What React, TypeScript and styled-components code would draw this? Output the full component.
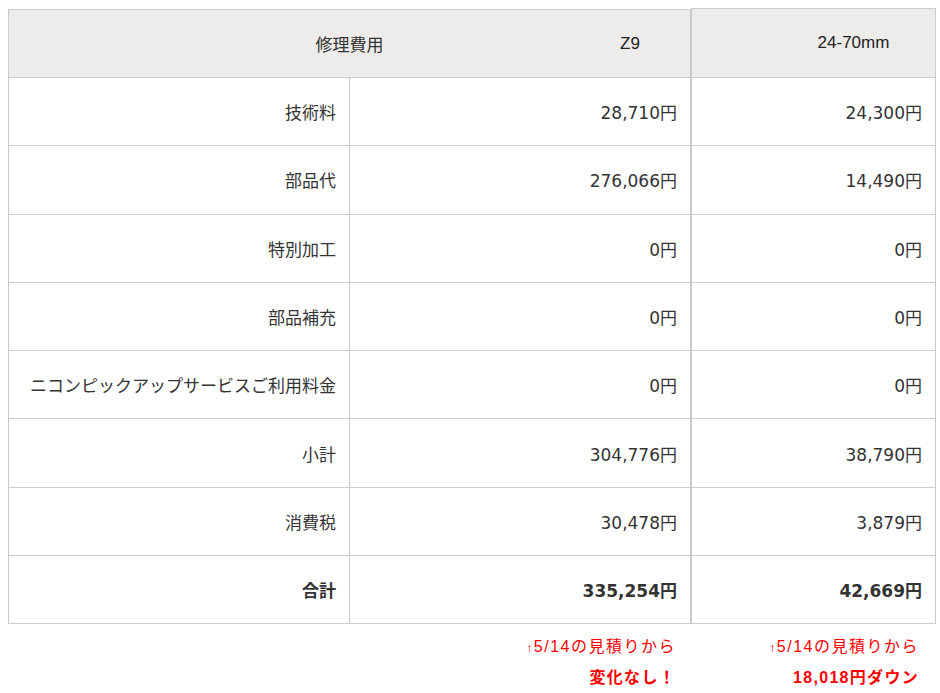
import styled, { createGlobalStyle } from 'styled-components';

const GlobalStyle = createGlobalStyle`
  html, body {
    overflow: hidden;
  }
  body {
    margin: 8px 0 0 8px;
    background: #fff;
    color: #333;
    font-family: "Liberation Sans", "Noto Sans CJK JP", sans-serif;
  }
`;

const Board = styled.div`
  display: flex;
  align-items: flex-start;
  width: 928px;
`;

const Column = styled.div<{ $width: number; $offset?: number }>`
  display: flex;
  flex-direction: column;
  flex: 0 0 ${(p) => p.$width}px;
  width: ${(p) => p.$width}px;
  margin-top: ${(p) => p.$offset ?? 0}px;
`;

const Table = styled.table`
  width: 100%;
  border-collapse: collapse;
  table-layout: fixed;
  border: 1px solid #cbcbc8;
`;

const HeadCell = styled.th<{ $tall?: boolean }>`
  height: ${(p) => (p.$tall ? 68 : 67)}px;
  padding: 0;
  background: #edecea;
  border: 1px solid #cbcbc8;
  font-weight: 400;
  font-size: 17px;
  color: #222;
`;

const HeadInner = styled.div`
  display: flex;
  align-items: center;
`;

const HeadTitle = styled.span`
  flex: 1;
  padding-left: 120px;
  text-align: center;
  font-family: "Noto Sans CJK JP", sans-serif;
  color: #333;
`;

const HeadModel = styled.span<{ $width: number }>`
  width: ${(p) => p.$width}px;
  text-align: center;
  font-family: "Liberation Sans", Arial, sans-serif;
`;

const HeadSingle = styled.div`
  padding-left: 80px;
  text-align: center;
  font-family: "Liberation Sans", Arial, sans-serif;
`;

const Cell = styled.td<{ $bold?: boolean }>`
  height: 67.3px;
  padding: 0 13px 0 0;
  border: 1px solid #cbcbc8;
  text-align: right;
  vertical-align: middle;
  font-size: 17px;
  font-weight: ${(p) => (p.$bold ? 700 : 400)};
  color: #333;
`;

const Label = styled(Cell)`
  font-family: "Noto Sans CJK JP", sans-serif;
`;

const Value = styled(Cell)`
  font-family: "DejaVu Sans", "Noto Sans CJK JP", sans-serif;
`;

const Note = styled.div<{ $pad: number }>`
  display: flex;
  flex-direction: column;
  align-items: flex-end;
  padding-right: ${(p) => p.$pad}px;
  color: #f00;
`;

const NoteLine = styled.div`
  margin-top: 12px;
  line-height: 22px;
  font-size: 16px;
  letter-spacing: 1.5px;
  font-family: "Liberation Sans", "Noto Sans CJK JP", sans-serif;
`;

const Arrow = styled.span`
  font-size: 13px;
  letter-spacing: 0;
  margin-right: 1px;
`;

const NoteStrong = styled.div`
  margin-top: 7px;
  line-height: 24px;
  font-size: 16px;
  font-weight: 700;
  letter-spacing: 1.3px;
  font-family: "Liberation Sans", "Noto Sans CJK JP", sans-serif;
`;

type Row = { label: string; z9: string; lens: string; bold?: boolean };

const rows: Row[] = [
  { label: '技術料', z9: '28,710円', lens: '24,300円' },
  { label: '部品代', z9: '276,066円', lens: '14,490円' },
  { label: '特別加工', z9: '0円', lens: '0円' },
  { label: '部品補充', z9: '0円', lens: '0円' },
  { label: 'ニコンピックアップサービスご利用料金', z9: '0円', lens: '0円' },
  { label: '小計', z9: '304,776円', lens: '38,790円' },
  { label: '消費税', z9: '30,478円', lens: '3,879円' },
  { label: '合計', z9: '335,254円', lens: '42,669円', bold: true },
];

export default function App() {
  return (
    <>
      <GlobalStyle />
      <Board>
        <Column $width={683} $offset={1}>
          <Table>
            <colgroup>
              <col style={{ width: 341 }} />
              <col style={{ width: 341 }} />
            </colgroup>
            <thead>
              <tr>
                <HeadCell colSpan={2}>
                  <HeadInner>
                    <HeadTitle>修理費用</HeadTitle>
                    <HeadModel $width={120}>Z9</HeadModel>
                  </HeadInner>
                </HeadCell>
              </tr>
            </thead>
            <tbody>
              {rows.map((r) => (
                <tr key={r.label}>
                  <Label $bold={r.bold}>{r.label}</Label>
                  <Value $bold={r.bold}>{r.z9}</Value>
                </tr>
              ))}
            </tbody>
          </Table>
          <Note $pad={15}>
            <NoteLine>
              <Arrow>↑</Arrow>5/14の見積りから
            </NoteLine>
            <NoteStrong>変化なし！</NoteStrong>
          </Note>
        </Column>
        <Column $width={245}>
          <Table>
            <thead>
              <tr>
                <HeadCell $tall>
                  <HeadSingle>24-70mm</HeadSingle>
                </HeadCell>
              </tr>
            </thead>
            <tbody>
              {rows.map((r) => (
                <tr key={r.label}>
                  <Value $bold={r.bold}>{r.lens}</Value>
                </tr>
              ))}
            </tbody>
          </Table>
          <Note $pad={17}>
            <NoteLine>
              <Arrow>↑</Arrow>5/14の見積りから
            </NoteLine>
            <NoteStrong>18,018円ダウン</NoteStrong>
          </Note>
        </Column>
      </Board>
    </>
  );
}
